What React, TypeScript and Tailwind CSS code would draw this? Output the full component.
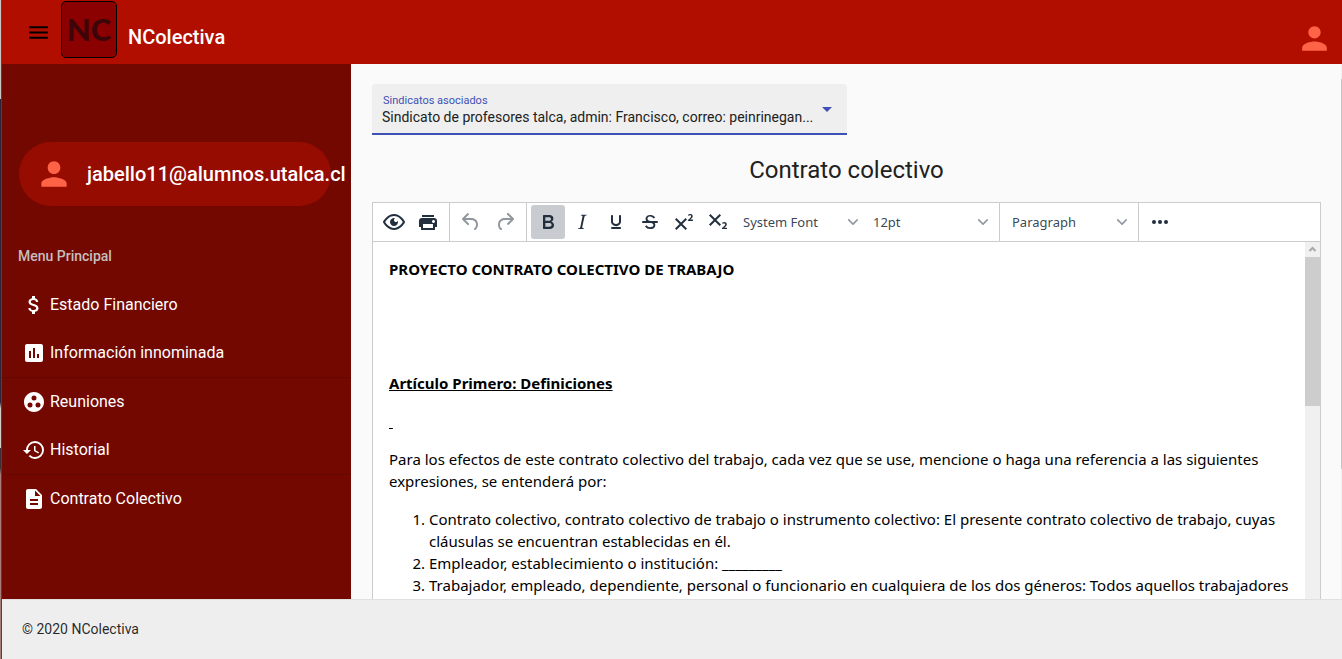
import type { ReactNode } from "react";
import {
  MdArrowDropDown,
  MdAssessment,
  MdAttachMoney,
  MdDescription,
  MdGroupWork,
  MdHistory,
  MdMenu,
  MdPerson,
} from "react-icons/md";

function Glyph({ d, children }: { d?: string; children?: ReactNode }) {
  return (
    <svg width="24" height="24" viewBox="0 0 24 24" fill="currentColor" aria-hidden="true">
      {d && <path d={d} />}
      {children}
    </svg>
  );
}

const icons = {
  preview:
    "M3.5 12.5c.5.8 1.1 1.6 1.8 2.3 2 2 4.2 3.2 6.7 3.2s4.7-1.2 6.7-3.2a16.2 16.2 0 0 0 2.1-2.8 15.7 15.7 0 0 0-2.1-2.8c-2-2-4.2-3.2-6.7-3.2a9.3 9.3 0 0 0-6.7 3.2A16.2 16.2 0 0 0 3.2 12c0 .2.2.3.3.5zm-2.4-1l.7-1.2L4 7.8C6.2 5.4 8.9 4 12 4c3 0 5.8 1.4 8.1 3.8a18.2 18.2 0 0 1 2.8 3.7v1l-.7 1.2-2.1 2.5c-2.3 2.4-5 3.8-8.1 3.8-3 0-5.8-1.4-8.1-3.8a18.2 18.2 0 0 1-2.8-3.7 1 1 0 0 1 0-1zm12-3.3a2 2 0 1 0 2.7 2.6 4 4 0 1 1-2.6-2.6z",
  print:
    "M18 8H6a3 3 0 0 0-3 3v6h2v3h14v-3h2v-6a3 3 0 0 0-3-3zm-1 10H7v-4h10v4zm.5-5c-.8 0-1.5-.7-1.5-1.5s.7-1.5 1.5-1.5 1.5.7 1.5 1.5-.7 1.5-1.5 1.5zm.5-8H6v2h12V5z",
  undo: "M6.4 8H12c3.7 0 6.2 2 6.8 5.1.6 2.7-.4 5.6-2.3 6.8a1 1 0 0 1-1-1.8c1.1-.6 1.8-2.7 1.4-4.6-.5-2.1-2.1-3.5-4.9-3.5H6.4l3.3 3.3a1 1 0 1 1-1.4 1.4l-5-5a1 1 0 0 1 0-1.4l5-5a1 1 0 0 1 1.4 1.4L6.4 8z",
  redo: "M17.6 10H12c-2.8 0-4.4 1.4-4.9 3.5-.4 2 .3 4 1.4 4.6a1 1 0 1 1-1 1.8c-2-1.2-2.9-4.1-2.3-6.8.6-3 3-5.1 6.8-5.1h5.6l-3.3-3.3a1 1 0 1 1 1.4-1.4l5 5a1 1 0 0 1 0 1.4l-5 5a1 1 0 0 1-1.4-1.4l3.3-3.3z",
  bold: "M7.8 19c-.3 0-.5 0-.6-.2l-.2-.5V5.7c0-.2 0-.4.2-.5l.6-.2h5c1.5 0 2.7.3 3.5 1 .7.6 1.1 1.4 1.1 2.5a3 3 0 0 1-.6 1.9c-.4.6-1 1-1.6 1.2.4.1.9.3 1.3.6s.8.7 1 1.2c.4.4.5 1 .5 1.6 0 1.3-.4 2.3-1.3 3-.8.7-2.1 1-3.8 1H7.8zm5-8.3c.6 0 1.2-.1 1.6-.5.4-.3.6-.7.6-1.3 0-1.1-.8-1.7-2.3-1.7H9.3v3.5h3.4zm.5 6c.7 0 1.3-.1 1.7-.4.4-.4.6-.9.6-1.5s-.2-1-.7-1.4c-.4-.3-1-.4-2-.4H9.4v3.8h4z",
  italic:
    "M16.7 4.7l-.1.9h-.3c-.6 0-1 0-1.4.3-.3.3-.4.6-.5 1.1l-2.1 9.8v.6c0 .5.4.8 1.4.8h.2l-.2.8H8l.2-.8h.2c1.1 0 1.8-.5 2-1.5l2-9.8.1-.5c0-.6-.4-.8-1.4-.8h-.3l.2-.9h5.8z",
  underline:
    "M16 5c.6 0 1 .4 1 1v5.5a4 4 0 0 1-.4 1.8l-1 1.4a5.3 5.3 0 0 1-5.5 1 5 5 0 0 1-1.6-1c-.5-.4-.8-.9-1.1-1.4a4 4 0 0 1-.4-1.8V6c0-.6.4-1 1-1s1 .4 1 1v5.5c0 .3 0 .6.2 1l.6.7a3.3 3.3 0 0 0 2.2.8 3.4 3.4 0 0 0 2.2-.8c.3-.2.4-.5.6-.8l.2-.9V6c0-.6.4-1 1-1zM8 17h8c.6 0 1 .4 1 1s-.4 1-1 1H8a1 1 0 0 1 0-2z",
  strike:
    "M15.6 8.5c-.5-.7-1-1.1-1.3-1.3-.6-.4-1.3-.6-2-.6-2.7 0-2.8 1.7-2.8 2.1 0 1.6 1.8 2 3.2 2.3 4.4.9 4.6 2.8 4.6 3.9 0 1.4-.7 4.1-5 4.1A6.2 6.2 0 0 1 7 16.4l1.5-1.1c.4.6 1.6 2 3.7 2 1.6 0 2.5-.4 3-1.2.4-.8.3-2-.8-2.6-.7-.4-1.6-.7-2.9-1-1-.2-3.9-.8-3.9-3.6C7.6 6 10.3 5 12.4 5c2.9 0 4.2 1.6 4.7 2.4l-1.5 1.1z",
  superscript:
    "M15 9.4L10.4 14l4.6 4.6-1.4 1.4L9 15.4 4.4 20 3 18.6 7.6 14 3 9.4 4.4 8 9 12.6 13.6 8 15 9.4zm5.9 1.6h-5v-1l1-.8 1.7-1.6c.3-.5.5-.9.5-1.3 0-.3 0-.5-.2-.7-.2-.2-.5-.3-.9-.3l-.8.2-.7.4-.4-1.2c.2-.2.5-.4 1-.5.3-.2.8-.2 1.2-.2.8 0 1.4.2 1.8.6.4.4.6 1 .6 1.6 0 .5-.2 1-.5 1.5l-1.3 1.4-.6.5h2.6V11z",
  subscript:
    "M10.4 10l4.6 4.6-1.4 1.4L9 11.4 4.4 16 3 14.6 7.6 10 3 5.4 4.4 4 9 8.6 13.6 4 15 5.4 10.4 10zM21 19h-5v-1l1-.8 1.7-1.6c.3-.4.5-.8.5-1.2 0-.3 0-.6-.2-.7-.2-.2-.5-.3-.9-.3a2 2 0 0 0-.8.2l-.7.3-.4-1.1 1-.6 1.2-.2c.8 0 1.4.3 1.8.7.4.4.6.9.6 1.5s-.2 1.1-.5 1.6a8 8 0 0 1-1.3 1.3l-.6.6h2.6V19z",
};

function ToolButton({
  label,
  active,
  disabled,
  children,
}: {
  label: string;
  active?: boolean;
  disabled?: boolean;
  children: ReactNode;
}) {
  return (
    <button
      type="button"
      aria-label={label}
      aria-pressed={active}
      disabled={disabled}
      className={`flex size-[34px] items-center justify-center rounded-[3px] ${
        active ? "bg-[#c8cbcf]" : ""
      } ${disabled ? "text-[#222f3e]/50" : "text-[#222f3e]"}`}
    >
      {children}
    </button>
  );
}

function ToolSelect({ label, value }: { label: string; value: string }) {
  return (
    <div className="grid w-[130px] grid-cols-1 items-center">
      <select
        aria-label={label}
        className="col-start-1 row-start-1 h-[34px] appearance-none bg-transparent pt-[2px] pr-6 pl-2 font-['Noto_Sans',sans-serif] text-[13px] text-[#222f3e]/90 outline-none"
      >
        <option>{value}</option>
      </select>
      <svg
        className="pointer-events-none col-start-1 row-start-1 mr-[7px] justify-self-end text-[#222f3e]/50"
        width="10"
        height="10"
        viewBox="0 0 10 10"
        fill="currentColor"
        aria-hidden="true"
      >
        <path d="M8.7 2.2c.3-.3.8-.3 1 0 .4.4.4.9 0 1.2L5.7 7.8c-.3.3-.9.3-1.2 0L.2 3.4a.8.8 0 0 1 0-1.2c.3-.3.8-.3 1.1 0L5 6l3.7-3.8z" />
      </svg>
    </div>
  );
}

function ToolGroup({ last, children }: { last?: boolean; children: ReactNode }) {
  return (
    <div className={`flex items-center px-1 py-[2px] ${last ? "" : "border-r border-[#cccccc]"}`}>
      {children}
    </div>
  );
}

function MenuLink({ icon, children }: { icon: ReactNode; children: ReactNode }) {
  return (
    <a href="#" className="flex h-12 items-center gap-1 pl-5 text-base text-white">
      {icon}
      {children}
    </a>
  );
}

function Header() {
  return (
    <header className="flex h-16 shrink-0 items-center bg-[#b20e00] pr-[9px] pl-6">
      <button type="button" aria-label="Menu" className="text-black">
        <MdMenu size={25} />
      </button>
      <div className="mb-[5px] ml-[10px] flex h-[57px] w-14 items-center justify-center rounded-[5px] border border-black bg-[#8b0000] font-[Lato,sans-serif] text-[31px] font-black text-[#3d0508]">
        NC
      </div>
      <h1 className="mt-[10px] ml-[11px] text-xl font-medium text-white">NColectiva</h1>
      <button type="button" aria-label="Perfil" className="mt-3 ml-auto text-[#ff6347]">
        <MdPerson size={37} />
      </button>
    </header>
  );
}

function Sidebar() {
  return (
    <aside className="w-[349px] shrink-0 bg-[#720800] pt-[78px]">
      <div className="mr-5 ml-[17px] flex h-16 items-center rounded-full bg-[#970c00] pl-4 text-xl font-medium whitespace-nowrap text-white">
        <MdPerson size={38} className="shrink-0 text-[#ff6347]" />
        <span className="ml-[14px]">jabello11@alumnos.utalca.cl</span>
      </div>
      <h2 className="mt-10 mb-[15px] pl-4 text-sm leading-5 font-medium text-[#c6bfbe]">
        Menu Principal
      </h2>
      <nav>
        <MenuLink icon={<MdAttachMoney size={24} />}>Estado Financiero</MenuLink>
        <MenuLink icon={<MdAssessment size={24} />}>Información innominada</MenuLink>
        <hr className="border-[#640700]" />
        <MenuLink icon={<MdGroupWork size={24} />}>Reuniones</MenuLink>
        <MenuLink icon={<MdHistory size={24} />}>Historial</MenuLink>
        <hr className="border-[#640700]" />
        <MenuLink icon={<MdDescription size={24} />}>Contrato Colectivo</MenuLink>
      </nav>
    </aside>
  );
}

function Toolbar() {
  return (
    <div className="flex shrink-0 border-b border-[#cccccc]">
      <ToolGroup>
        <ToolButton label="Preview">
          <Glyph d={icons.preview} />
        </ToolButton>
        <ToolButton label="Print">
          <Glyph d={icons.print} />
        </ToolButton>
      </ToolGroup>
      <ToolGroup>
        <ToolButton label="Undo" disabled>
          <Glyph d={icons.undo} />
        </ToolButton>
        <ToolButton label="Redo" disabled>
          <Glyph d={icons.redo} />
        </ToolButton>
      </ToolGroup>
      <ToolGroup>
        <ToolButton label="Bold" active>
          <Glyph d={icons.bold} />
        </ToolButton>
        <ToolButton label="Italic">
          <Glyph d={icons.italic} />
        </ToolButton>
        <ToolButton label="Underline">
          <Glyph d={icons.underline} />
        </ToolButton>
        <ToolButton label="Strikethrough">
          <Glyph d={icons.strike}>
            <path d="M5 11h14a1 1 0 0 1 0 2H5a1 1 0 0 1 0-2z" />
          </Glyph>
        </ToolButton>
        <ToolButton label="Superscript">
          <Glyph d={icons.superscript} />
        </ToolButton>
        <ToolButton label="Subscript">
          <Glyph d={icons.subscript} />
        </ToolButton>
        <ToolSelect label="Font" value="System Font" />
        <ToolSelect label="Font size" value="12pt" />
      </ToolGroup>
      <ToolGroup>
        <ToolSelect label="Block" value="Paragraph" />
      </ToolGroup>
      <ToolGroup last>
        <ToolButton label="More">
          <Glyph>
            <circle cx="6" cy="12" r="2" />
            <circle cx="12" cy="12" r="2" />
            <circle cx="18" cy="12" r="2" />
          </Glyph>
        </ToolButton>
      </ToolGroup>
    </div>
  );
}

function Document() {
  return (
    <div className="min-w-0 flex-1 space-y-4 overflow-hidden py-4 pr-2 pl-4 font-['Noto_Sans',sans-serif] text-[15px] leading-[22px] text-black">
      <p className="font-bold">PROYECTO CONTRATO COLECTIVO DE TRABAJO</p>
      <p>&nbsp;</p>
      <p>&nbsp;</p>
      <p className="font-bold underline">Artículo Primero: Definiciones</p>
      <p className="underline">&nbsp;</p>
      <p>
        Para los efectos de este contrato colectivo del trabajo, cada vez que se use, mencione o haga
        una referencia a las siguientes expresiones, se entenderá por:
      </p>
      <ol className="list-decimal pl-10">
        <li>
          Contrato colectivo, contrato colectivo de trabajo o instrumento colectivo: El presente
          contrato colectivo de trabajo, cuyas cláusulas se encuentran establecidas en él.
        </li>
        <li>Empleador, establecimiento o institución: _________</li>
        <li>
          Trabajador, empleado, dependiente, personal o funcionario en cualquiera de los dos géneros:
          Todos aquellos trabajadores
        </li>
      </ol>
    </div>
  );
}

export default function App() {
  return (
    <div className="flex h-screen overflow-hidden bg-[#fafafa] font-[Roboto,sans-serif] text-[#212121]">
      <div className="w-[2px] shrink-0 border-r border-[#55403f] bg-[linear-gradient(#c8c8c8_15%,#2b2438_15%,#2b2438_61%,#d0d0c8_62%,#d0d0c8_68%,#3a3038_68%,#3a3038_71%,#a87c78_72%)]" />
      <div className="flex min-w-0 flex-1 flex-col">
        <Header />
        <div className="flex min-h-0 flex-1 overflow-hidden">
          <Sidebar />
          <main className="flex min-w-0 flex-1 flex-col pt-5 pr-5 pl-[21px]">
            <div className="grid w-1/2 shrink-0 grid-cols-1 rounded-t border-b-2 border-[#3f51b5] bg-[#efefef] pb-[6px]">
              <label
                htmlFor="sindicato"
                className="px-[11px] pt-[10px] text-[11px] leading-[13px] text-[#3f51b5]"
              >
                Sindicatos asociados
              </label>
              <div className="grid grid-cols-1 items-center">
                <select
                  id="sindicato"
                  className="col-start-1 row-start-1 h-5 min-w-0 appearance-none bg-transparent pl-[10px] text-sm text-[#212121] outline-none"
                >
                  <option>Sindicato de profesores talca, admin: Francisco, correo: peinrinegan...</option>
                </select>
                <MdArrowDropDown
                  size={24}
                  className="pointer-events-none col-start-1 row-start-1 -mt-4 mr-2 justify-self-end text-[#3f51b5]"
                />
              </div>
            </div>
            <h2 className="mt-[19px] mb-4 text-center text-2xl leading-8">Contrato colectivo</h2>
            <section className="flex min-h-0 flex-1 flex-col border border-b-0 border-[#cccccc] bg-white">
              <Toolbar />
              <div className="flex min-h-0 flex-1">
                <Document />
                <div className="flex w-[15px] shrink-0 flex-col bg-[#f0f0f0]">
                  <svg width="15" height="15" viewBox="0 0 15 15" fill="none" aria-hidden="true">
                    <path d="M4.500 9l3-3 3 3" stroke="#a8a8a8" strokeWidth="2" />
                  </svg>
                  <div className="h-[149px] bg-[#cdcdcd]" />
                </div>
              </div>
            </section>
          </main>
          <div className="w-px shrink-0 bg-[#f0f0f0] pt-[15px]">
            <div className="h-[390px] bg-[#c4c4c4]" />
          </div>
        </div>
        <footer className="flex h-[60px] shrink-0 items-center border-t border-[#e0e0e0] bg-[#eeeeee] pb-[2px] pl-5 text-sm text-black/85">
          © 2020 NColectiva
        </footer>
      </div>
    </div>
  );
}
